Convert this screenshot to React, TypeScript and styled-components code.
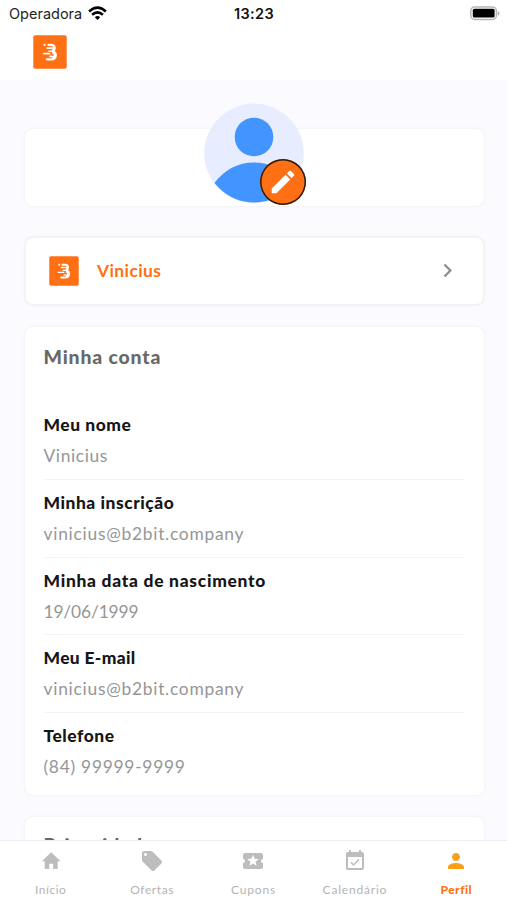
import React from 'react';
import styled, { createGlobalStyle } from 'styled-components';
import {
  MdChevronRight,
  MdEdit,
  MdEventAvailable,
  MdLocalActivity,
  MdLocalOffer,
  MdPerson,
} from 'react-icons/md';

const GlobalStyle = createGlobalStyle`
  * { box-sizing: border-box; }
  body { margin: 0; background: #fbfbff; }
`;

const Screen = styled.div`
  width: 507px;
  height: 900px;
  display: flex;
  flex-direction: column;
  overflow: hidden;
  background: #fbfbff;
  font-family: Lato, 'Open Sans', sans-serif;
`;

const Header = styled.header`
  flex: none;
  height: 80px;
  background: #fff;
`;

const StatusBar = styled.div`
  height: 28px;
  padding: 0 7px 0 9px;
  display: grid;
  grid-template-columns: 1fr auto 1fr;
  align-items: center;
  font: 400 14.5px/28px Inter, sans-serif;
  color: #242424;
`;

const Carrier = styled.div`
  display: flex;
  align-items: center;
  gap: 6px;
  svg { margin-top: -2px; }
`;

const Clock = styled.time`
  margin-right: 1px;
  font-weight: 600;
  color: #111;
  letter-spacing: 0.35px;
`;

const BatterySlot = styled.div`
  display: flex;
  justify-content: flex-end;
  padding-bottom: 1px;
`;

const Brand = styled.div`
  padding: 7px 0 0 33px;
  display: flex;
`;

const Content = styled.main`
  flex: 1;
  min-height: 0;
  overflow: hidden;
  padding: 48px 22.5px 0 23.5px;
`;

const Card = styled.section`
  background: #fff;
  border: 1px solid #f5f5f8;
  border-radius: 9px;
  box-shadow: 0 0 3px rgba(40, 40, 70, 0.03);
`;

const PhotoCard = styled(Card)`
  height: 79px;
  display: flex;
  justify-content: center;
`;

const Avatar = styled.div`
  position: relative;
  width: 100px;
  height: 100px;
  margin-top: -26px;
`;

const EditButton = styled.button`
  position: absolute;
  left: 55.5px;
  top: 56px;
  width: 46px;
  height: 46px;
  padding: 0;
  display: grid;
  place-items: center;
  border: 0;
  border-radius: 50%;
  box-shadow: inset 0 0 0 1.5px #2c1a10;
  background: #ff7014;
  color: #fff;
`;

const ProfileCard = styled(Card)`
  height: 70px;
  margin-top: 29px;
  padding: 0 22px 1px 24px;
  display: flex;
  align-items: center;
  border: 2px solid #f3f3f6;
  svg:first-child { margin-left: -1px; }
`;

const Name = styled.span`
  flex: 1;
  margin-left: 18.5px;
  font-size: 17.4px;
  line-height: 24px;
  font-weight: 700;
  letter-spacing: 0.42px;
  color: #ff7014;
`;

const AccountCard = styled(Card)`
  height: 470px;
  margin-top: 20px;
  padding: 17px 20px 0 19px;
`;

const NextCard = styled(Card)`
  height: 120px;
  margin-top: 20px;
  padding: 15px 20px 0 19px;
`;

const Title = styled.h2`
  margin: 0;
  font-size: 19.4px;
  line-height: 26px;
  font-weight: 900;
  letter-spacing: 0.85px;
  color: #686868;
`;

const Fields = styled.dl`
  margin: 32px 0 0;
`;

const Field = styled.div`
  height: 77.8px;
  padding-top: 11px;
  border-bottom: 1px solid #f3f3f5;
  &:last-child { border-bottom: 0; }
`;

const FieldLabel = styled.dt<{ $track: number }>`
  font-size: 17.4px;
  line-height: 24px;
  font-weight: 900;
  color: #161616;
  letter-spacing: ${(p) => p.$track}px;
  white-space: nowrap;
`;

const FieldValue = styled.dd<{ $track: number }>`
  margin: 7px 0 0;
  font-size: 17.4px;
  line-height: 24px;
  color: #969696;
  letter-spacing: ${(p) => p.$track}px;
  white-space: nowrap;
`;

const TabBar = styled.nav`
  flex: none;
  height: 60px;
  display: grid;
  grid-template-columns: repeat(5, 1fr);
  border-top: 1px solid #efeff0;
  background: #fff;
`;

const Tab = styled.a<{ $active?: boolean; $track: number }>`
  display: flex;
  flex-direction: column;
  align-items: center;
  padding-top: 8px;
  color: ${(p) => (p.$active ? '#f9a01b' : '#bdbdbd')};
  span {
    margin-top: 9px;
    font-size: 12px;
    line-height: 16px;
    font-weight: ${(p) => (p.$active ? 900 : 400)};
    letter-spacing: ${(p) => p.$track}px;
    color: ${(p) => (p.$active ? '#ff7014' : '#b4b4b4')};
  }
`;

const Logo = ({ size }: { size: number }) => (
  <svg width={size} height={size} viewBox="0 0 34 34">
    <rect x=".3" y=".3" width="33.4" height="33.4" rx="2" fill="#ff7014" />
    <g fill="none" stroke="#fff" strokeLinecap="round" strokeLinejoin="round">
      <path strokeWidth="2.3" d="M15.4 9.9h2.8c4.2 0 4.2 4.6 1.6 6.4c4.6 1.5 3.6 8-1.2 8h-4.8" />
      <path strokeWidth="1.6" d="M14 13.1h4.8M16 16.3h3.6M10.6 18.6h6.2M17 21.4h3" />
    </g>
    <path d="M19.4 11.4l2 1.6-1.6 3.4 3 2.6-.8 3.6-2.8 1z" fill="#fff" />
    <circle cx="11.6" cy="9.9" r="1.1" fill="#fff" />
    <circle cx="19.8" cy="20" r=".9" fill="#ff7014" />
  </svg>
);

const WifiIcon = () => (
  <svg width="19" height="15" viewBox="0 0 19 15" fill="none" stroke="#000" strokeWidth="2.5">
    <path d="M1.1 5.5Q9.5-2.2 17.9 5.5" />
    <path d="M4.1 8.8Q9.5 4 14.9 8.8" />
    <path d="M6.8 11.2Q9.5 8.8 12.2 11.2L9.5 14z" fill="#000" stroke="none" />
  </svg>
);

const BatteryIcon = () => (
  <svg width="31" height="15" viewBox="0 0 31 15">
    <rect x="1.8" y=".9" width="25.6" height="12.6" rx="4" fill="#fff" stroke="#b7b7b7" strokeWidth="1.5" />
    <rect x="3.8" y="2.8" width="21.8" height="8.8" rx="1.5" fill="#000" />
    <path d="M28.8 5v4.7q1.6-.7 1.6-2.35T28.8 5z" fill="#aaa" />
  </svg>
);

const HomeIcon = () => (
  <svg width="24" height="24" viewBox="0 0 24 24" fill="currentColor">
    <path d="M10.3 20v-5.3h3.8V20h4.6v-7.8h2.9L12.2 3.3l-9.4 8.9h2.9V20z" />
  </svg>
);

const Portrait = () => (
  <svg width="100" height="100" viewBox="0 0 100 100">
    <defs>
      <clipPath id="portrait">
        <circle cx="50" cy="50" r="49.5" />
      </clipPath>
    </defs>
    <circle cx="50" cy="50.3" r="49.7" fill="#e7ecff" />
    <g clipPath="url(#portrait)" fill="#4294ff">
      <circle cx="50" cy="34" r="19.3" />
      <path d="M10 80.5Q26 59.5 50 59.5T90 80.5V100H10z" />
    </g>
  </svg>
);

const fields = [
  { label: 'Meu nome', value: 'Vinicius', lt: 0.55, vt: 0.6 },
  { label: 'Minha inscrição', value: 'vinicius@b2bit.company', lt: 0.55, vt: 0.74 },
  { label: 'Minha data de nascimento', value: '19/06/1999', lt: 0.73, vt: -0.15 },
  { label: 'Meu E-mail', value: 'vinicius@b2bit.company', lt: 0.35, vt: 0.74 },
  { label: 'Telefone', value: '(84) 99999-9999', lt: 0.55, vt: 0.73 },
];

const tabs = [
  { name: 'Início', icon: <HomeIcon />, track: 0.5 },
  { name: 'Ofertas', icon: <MdLocalOffer size={24} />, track: 0.6 },
  { name: 'Cupons', icon: <MdLocalActivity size={24} />, track: 0.8 },
  { name: 'Calendário', icon: <MdEventAvailable size={24} />, track: 0.8 },
  { name: 'Perfil', icon: <MdPerson size={24} />, track: 0.5, active: true },
];

export default function App() {
  return (
    <>
      <GlobalStyle />
      <Screen>
        <Header>
          <StatusBar>
            <Carrier>
              Operadora
              <WifiIcon />
            </Carrier>
            <Clock>13:23</Clock>
            <BatterySlot>
              <BatteryIcon />
            </BatterySlot>
          </StatusBar>
          <Brand>
            <Logo size={34} />
          </Brand>
        </Header>
        <Content>
          <PhotoCard>
            <Avatar>
              <Portrait />
              <EditButton aria-label="Editar foto">
                <MdEdit size={30} />
              </EditButton>
            </Avatar>
          </PhotoCard>
          <ProfileCard>
            <Logo size={30} />
            <Name>Vinicius</Name>
            <MdChevronRight size={27} color="#8e8e8e" />
          </ProfileCard>
          <AccountCard>
            <Title>Minha conta</Title>
            <Fields>
              {fields.map((f) => (
                <Field key={f.label}>
                  <FieldLabel $track={f.lt}>{f.label}</FieldLabel>
                  <FieldValue $track={f.vt}>{f.value}</FieldValue>
                </Field>
              ))}
            </Fields>
          </AccountCard>
          <NextCard>
            <Title>Privacidade</Title>
          </NextCard>
        </Content>
        <TabBar>
          {tabs.map((t) => (
            <Tab key={t.name} $active={t.active} $track={t.track}>
              {t.icon}
              <span>{t.name}</span>
            </Tab>
          ))}
        </TabBar>
      </Screen>
    </>
  );
}
